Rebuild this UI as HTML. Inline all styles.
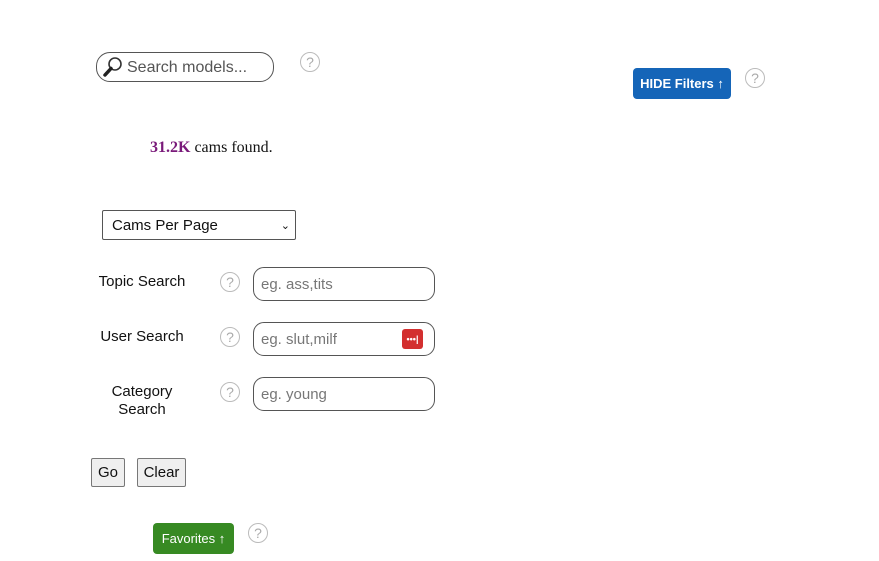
<!DOCTYPE html>
<html><head><style>
body{margin:0;width:879px;height:561px;background:#fff;position:relative;font-family:"Liberation Sans",Arial,sans-serif;overflow:hidden}
.a{position:absolute}
.h{position:absolute;width:18px;height:18px;border:1.8px solid #bbb;border-radius:50%;color:#aaa;font-size:14px;line-height:19px;text-align:center}
.in{position:absolute;border:1px solid #555;border-radius:11px;box-sizing:border-box;font-size:15px;color:#777;padding-left:7px;line-height:33px}
.lb{position:absolute;font-size:15px;color:#111;text-align:center}
.bt{position:absolute;background:#efefef;border:1px solid #777;border-radius:2px;box-sizing:border-box;font-size:15px;text-align:center;line-height:28px;color:#111}
</style></head><body>
<div class="in" style="left:96px;top:52px;width:178px;height:30px;border-radius:14px;padding-left:30px;line-height:29px;color:#555;font-size:16px">Search models...</div>
<svg class="a" style="left:102px;top:56px" width="22" height="22" viewBox="0 0 22 22"><circle cx="13" cy="8" r="6" fill="#fff" stroke="#333" stroke-width="1.6"/><line x1="9" y1="12.5" x2="3" y2="19" stroke="#222" stroke-width="3.5" stroke-linecap="round"/></svg>
<div class="h" style="left:300px;top:52px">?</div>
<div class="a" style="left:633px;top:68px;width:98px;height:31px;background:#1565b8;border-radius:4px;color:#fff;font-size:13px;font-weight:bold;line-height:32px;text-align:center">HIDE Filters ↑</div>
<div class="h" style="left:745px;top:68px">?</div>
<div class="a" style="left:150px;top:139px;font-family:'Liberation Serif',serif;font-size:16px;color:#111"><b style="color:#7a1a7a">31.2K</b> cams found.</div>
<div class="a" style="left:102px;top:210px;width:194px;height:30px;border:1px solid #555;border-radius:2px;box-sizing:border-box;font-size:15px;line-height:30px;padding-left:9px;color:#111">Cams Per Page<span style="position:absolute;right:5px;top:0;font-size:11px">⌄</span></div>
<div class="lb" style="left:92px;top:273px;width:100px">Topic Search</div>
<div class="lb" style="left:92px;top:328px;width:100px">User Search</div>
<div class="lb" style="left:92px;top:383px;width:100px;line-height:18px">Category<br>Search</div>
<div class="h" style="left:220px;top:272px">?</div>
<div class="h" style="left:220px;top:327px">?</div>
<div class="h" style="left:220px;top:382px">?</div>
<div class="in" style="left:253px;top:267px;width:182px;height:34px">eg. ass,tits</div>
<div class="in" style="left:253px;top:322px;width:182px;height:34px">eg. slut,milf</div>
<div class="a" style="left:402px;top:329px;width:21px;height:20px;background:#d32f2f;border-radius:3px;color:#fff;font-size:9px;line-height:20px;text-align:center;font-weight:bold">•••|</div>
<div class="in" style="left:253px;top:377px;width:182px;height:34px">eg. young</div>
<div class="bt" style="left:91px;top:458px;width:34px;height:29px">Go</div>
<div class="bt" style="left:137px;top:458px;width:49px;height:29px">Clear</div>
<div class="a" style="left:153px;top:523px;width:81px;height:31px;background:#378a23;border-radius:4px;color:#fff;font-size:13px;line-height:31px;text-align:center">Favorites ↑</div>
<div class="h" style="left:248px;top:523px">?</div>
</body></html>
